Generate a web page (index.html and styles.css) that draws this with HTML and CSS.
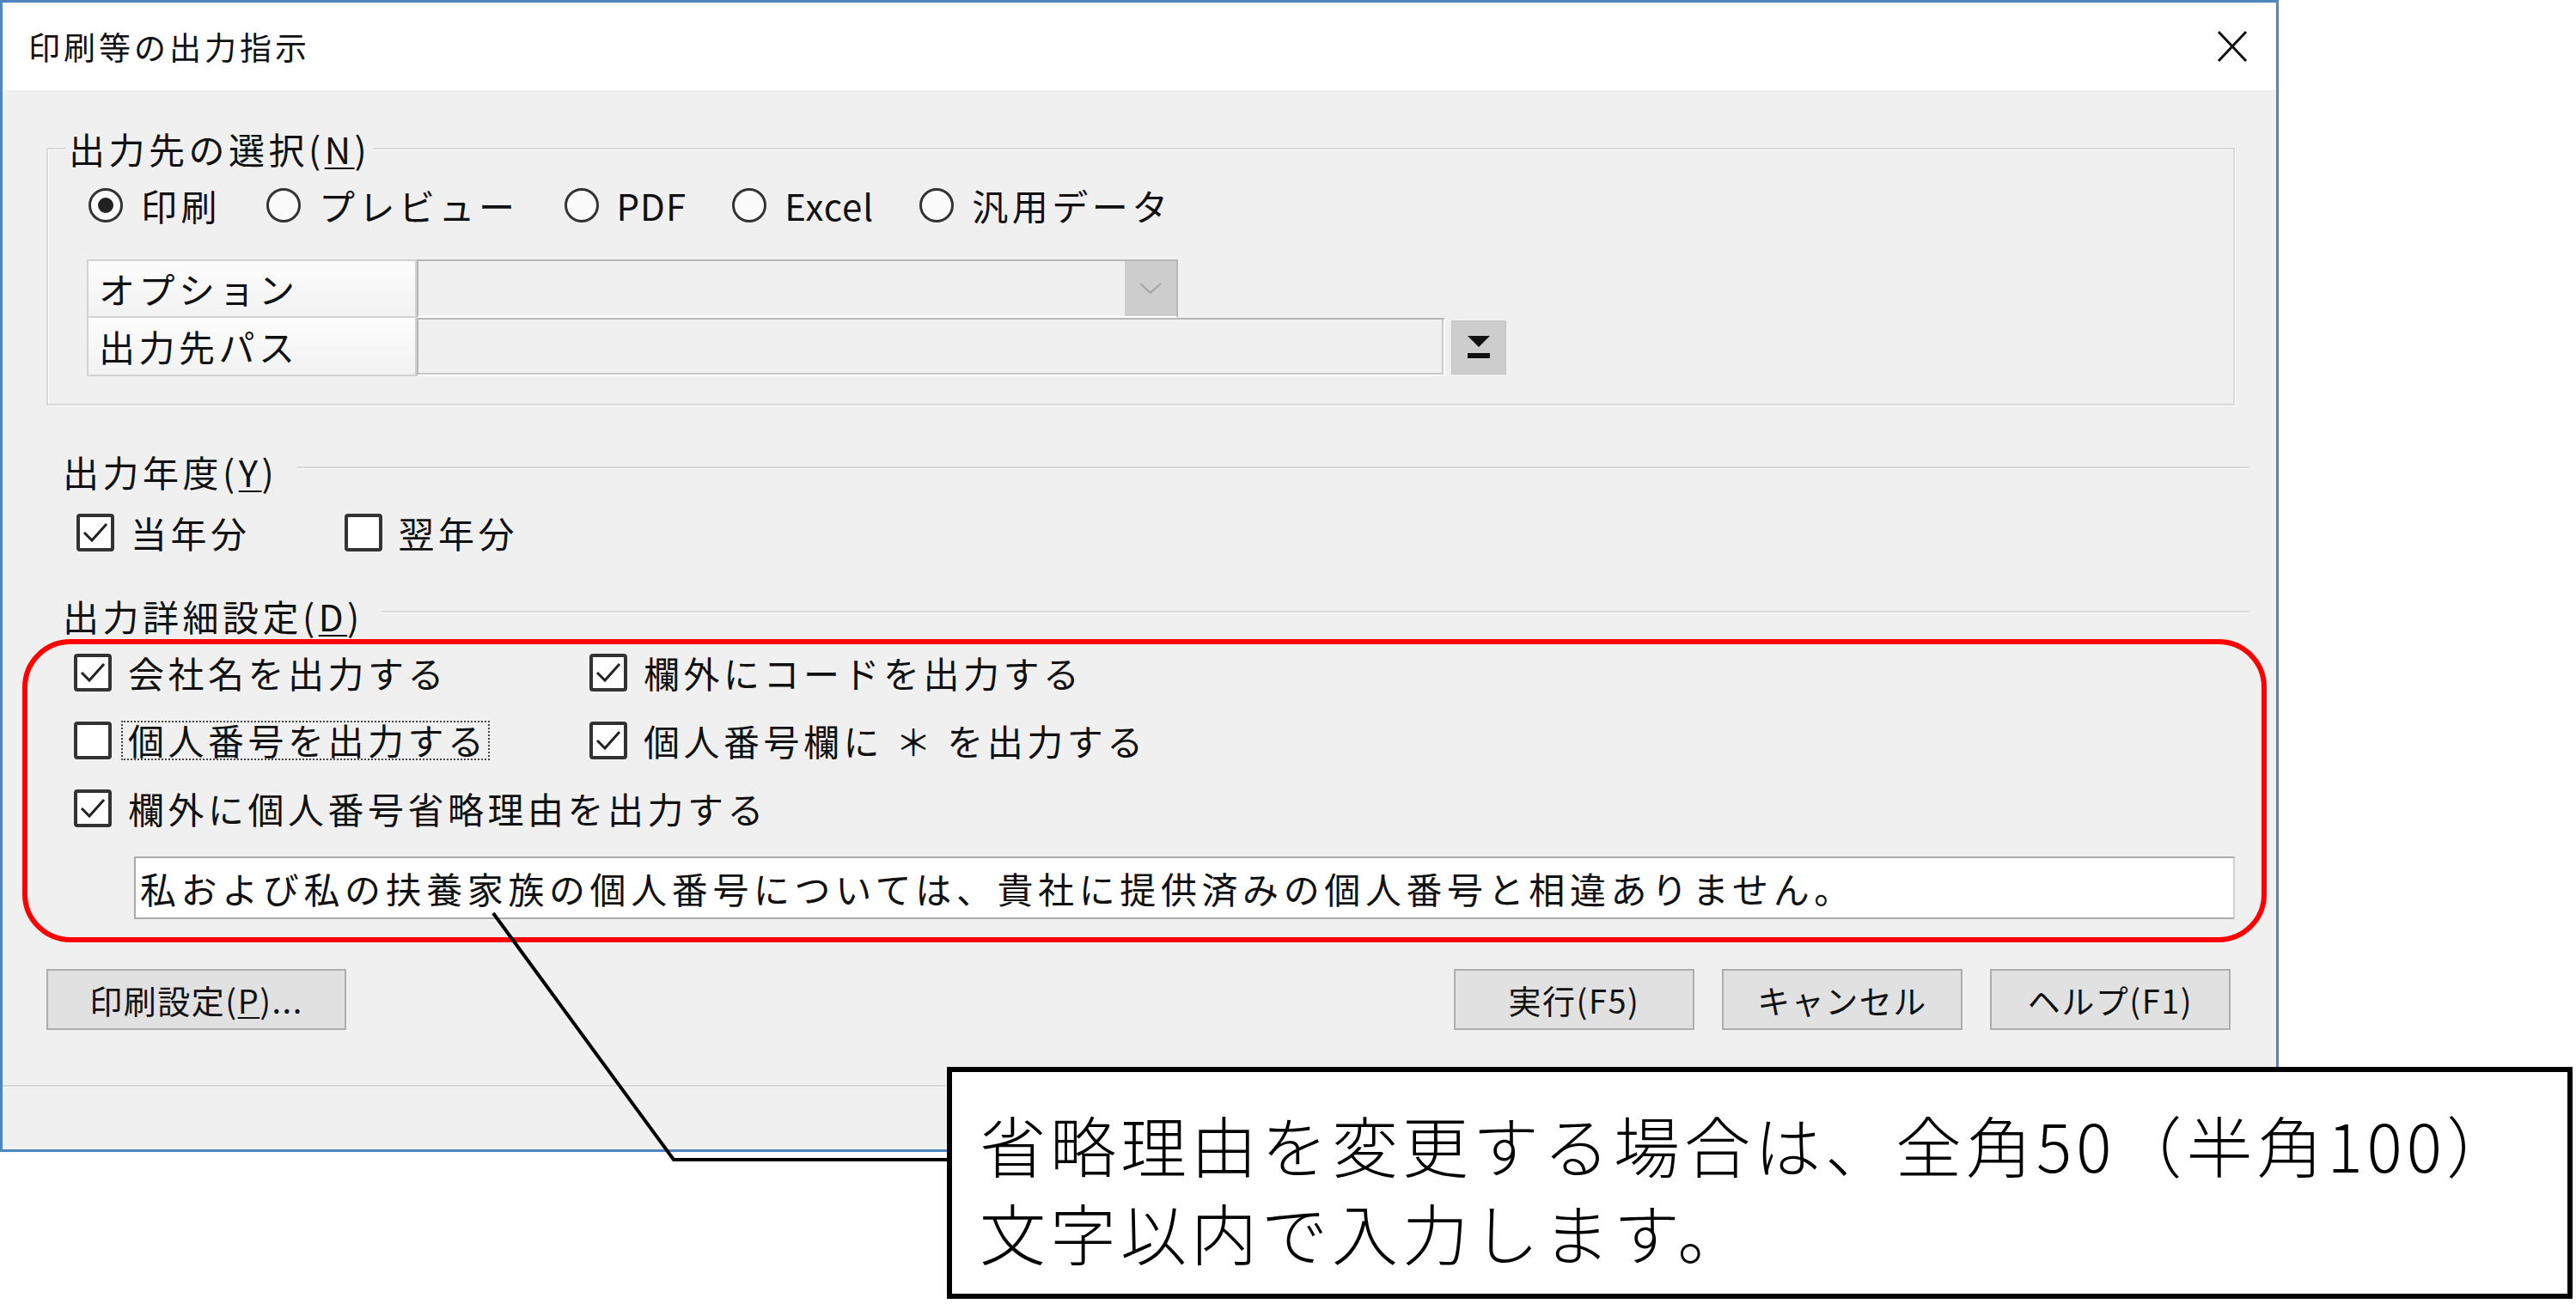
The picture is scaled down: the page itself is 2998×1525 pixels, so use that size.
FILE: index.html
```html
<!DOCTYPE html>
<html lang="ja">
<head>
    <meta charset="UTF-8">
    <title>印刷等の出力指示</title>
    <link rel="stylesheet" href="styles.css">
</head>
<body>
<div class="page">
    <div class="dialog">
        <div class="titlebar">
            <span class="title">印刷等の出力指示</span>
            <svg class="close" width="38" height="38" viewBox="0 0 38 38"><path d="M3 2 L35 36 M35 2 L3 36" stroke="#111" stroke-width="3" fill="none"/></svg>
        </div>
        <div class="dlg-body">
            <div class="group">
                <div class="group-title">出力先の選択(<u>N</u>)</div>
                <div class="radio-row">
                    <label class="radio"><svg width="42" height="42" viewBox="0 0 42 42"><circle cx="21" cy="21" r="18.5" fill="#fbfbfb" stroke="#333" stroke-width="3"/><circle cx="21" cy="21" r="9" fill="#222"/></svg>印刷</label>
                    <label class="radio"><svg width="42" height="42" viewBox="0 0 42 42"><circle cx="21" cy="21" r="18.5" fill="#fbfbfb" stroke="#333" stroke-width="3"/></svg>プレビュー</label>
                    <label class="radio"><svg width="42" height="42" viewBox="0 0 42 42"><circle cx="21" cy="21" r="18.5" fill="#fbfbfb" stroke="#333" stroke-width="3"/></svg><span class="latin">PDF</span></label>
                    <label class="radio"><svg width="42" height="42" viewBox="0 0 42 42"><circle cx="21" cy="21" r="18.5" fill="#fbfbfb" stroke="#333" stroke-width="3"/></svg><span class="latin">Excel</span></label>
                    <label class="radio"><svg width="42" height="42" viewBox="0 0 42 42"><circle cx="21" cy="21" r="18.5" fill="#fbfbfb" stroke="#333" stroke-width="3"/></svg>汎用データ</label>
                </div>
                <div class="opt-table">
                    <div class="opt-row">
                        <div class="opt-label">オプション</div>
                        <div class="opt-field combo">
                            <span class="combo-btn"><svg width="26" height="14" viewBox="0 0 26 14"><polyline points="1,1 13,12 25,1" fill="none" stroke="#a3a3a3" stroke-width="2"/></svg></span>
                        </div>
                    </div>
                    <div class="opt-row">
                        <div class="opt-label">出力先パス</div>
                        <div class="opt-field path"></div>
                        <span class="path-btn"><svg width="26" height="26" viewBox="0 0 26 26"><polygon points="0,0 26,0 13,13" fill="#111"/><rect x="0" y="20" width="26" height="6" fill="#111"/></svg></span>
                    </div>
                </div>
            </div>

            <div class="section-head"><span>出力年度(<u>Y</u>)</span><span class="rule"></span></div>
            <div class="year-row">
                <label class="check"><svg width="44" height="44" viewBox="0 0 44 44"><rect x="2" y="2" width="40" height="40" rx="2" fill="#fff" stroke="#333" stroke-width="4"/><polyline points="9,22 18,31 35,12" fill="none" stroke="#222" stroke-width="3"/></svg>当年分</label>
                <label class="check"><svg width="44" height="44" viewBox="0 0 44 44"><rect x="2" y="2" width="40" height="40" rx="2" fill="#fff" stroke="#333" stroke-width="4"/></svg>翌年分</label>
            </div>

            <div class="section-head"><span>出力詳細設定(<u>D</u>)</span><span class="rule"></span></div>
            <div class="highlight">
                <div class="detail-grid">
                    <label class="check"><svg width="44" height="44" viewBox="0 0 44 44"><rect x="2" y="2" width="40" height="40" rx="2" fill="#fff" stroke="#333" stroke-width="4"/><polyline points="9,22 18,31 35,12" fill="none" stroke="#222" stroke-width="3"/></svg>会社名を出力する</label>
                    <label class="check"><svg width="44" height="44" viewBox="0 0 44 44"><rect x="2" y="2" width="40" height="40" rx="2" fill="#fff" stroke="#333" stroke-width="4"/><polyline points="9,22 18,31 35,12" fill="none" stroke="#222" stroke-width="3"/></svg>欄外にコードを出力する</label>
                    <label class="check"><svg width="44" height="44" viewBox="0 0 44 44"><rect x="2" y="2" width="40" height="40" rx="2" fill="#fff" stroke="#333" stroke-width="4"/></svg><span class="focus">個人番号を出力する</span></label>
                    <label class="check"><svg width="44" height="44" viewBox="0 0 44 44"><rect x="2" y="2" width="40" height="40" rx="2" fill="#fff" stroke="#333" stroke-width="4"/><polyline points="9,22 18,31 35,12" fill="none" stroke="#222" stroke-width="3"/></svg>個人番号欄に ＊ を出力する</label>
                    <label class="check wide"><svg width="44" height="44" viewBox="0 0 44 44"><rect x="2" y="2" width="40" height="40" rx="2" fill="#fff" stroke="#333" stroke-width="4"/><polyline points="9,22 18,31 35,12" fill="none" stroke="#222" stroke-width="3"/></svg>欄外に個人番号省略理由を出力する</label>
                </div>
                <div class="reason-input">私および私の扶養家族の個人番号については、貴社に提供済みの個人番号と相違ありません。</div>
            </div>

            <div class="btn-row">
                <button class="btn btn-wide">印刷設定(<u>P</u>)...</button>
                <div class="btn-group">
                    <button class="btn">実行(F5)</button>
                    <button class="btn">キャンセル</button>
                    <button class="btn">ヘルプ(F1)</button>
                </div>
            </div>
            <div class="sep"></div>
        </div>
    </div>

    <svg class="leader" width="2998" height="1525" viewBox="0 0 2998 1525"><polyline points="574,1063 784,1350 1106,1350" fill="none" stroke="#000" stroke-width="4"/></svg>
    <div class="callout">省略理由を変更する場合は、全角50（半角100）<br>文字以内で入力します。</div>
</div>
</body>
</html>
```

FILE: styles.css
```css
body { margin: 0; background: #fff; font-family: "Noto Sans CJK JP", "Noto Sans", sans-serif; color: #111; }
.page { position: relative; width: 2998px; height: 1525px; overflow: hidden; }

/* dialog frame */
.dialog { width: 2652px; height: 1341px; box-sizing: border-box; border: 3px solid #4f86bd; background: #f0f0f0; display: flex; flex-direction: column; }
.titlebar { height: 102px; flex: none; background: #fff; display: flex; align-items: center; justify-content: space-between; padding: 0 32px 0 30px; }
.title { font-size: 37px; letter-spacing: 4px; color: #111; }
.close { display: block; }

.dlg-body { flex: 1; font-size: 42px; letter-spacing: 4.5px; line-height: 40px; }
u { text-decoration-thickness: 2px; text-underline-offset: 4px; }
.latin { letter-spacing: 1px; }

/* group box */
.group { margin: 67px 48px 0 51px; border: 2px solid #d9d9d9; box-shadow: inset 1px 1px 0 #fff, 1px 1px 0 #fff; padding: 0 0 32px 0; }
.group-title { width: fit-content; height: 40px; margin: -21px 0 0 20px; padding: 0 4px; background: #f0f0f0; }
.radio-row { display: flex; align-items: center; gap: 52px; height: 44px; margin: 24px 0 0 46px; }
.radio { display: flex; align-items: center; gap: 20px; }
.radio svg, .check svg { display: block; flex: none; }

.opt-table { margin: 41px 0 0 45px; }
.opt-row { display: flex; align-items: center; height: 68px; }
.opt-label { width: 384px; height: 68px; box-sizing: border-box; border: 2px solid #d2d2d2; background: linear-gradient(#fdfdfd, #f2f2f2); padding-left: 12px; display: flex; align-items: center; }
.opt-row + .opt-row .opt-label { border-top: none; }
.opt-field { height: 68px; box-sizing: border-box; border: 2px solid #b7b7b7; border-right-color: #fff; border-bottom-color: #fff; background: #f0f0f0; }
.combo { width: 886px; display: flex; justify-content: flex-end; border-right-color: #b7b7b7; }
.combo-btn { width: 60px; height: 100%; background: #cdcdcd; display: flex; align-items: center; justify-content: center; }
.path { width: 1197px; box-shadow: inset -2px -2px 0 #c9c9c9; }
.path-btn { width: 64px; height: 63px; margin-left: 7px; box-sizing: border-box; border: 1px solid #c3c3c3; background: #cdcdcd; display: flex; align-items: center; justify-content: center; }

/* etched section headings */
.section-head { display: flex; align-items: center; height: 40px; margin: 57px 32px 0 70px; }
.section-head .rule { flex: 1; margin: 0 0 10px 22px; border-top: 2px solid #dadada; border-bottom: 1px solid #fafafa; }
.year-row { display: flex; align-items: center; gap: 109px; height: 44px; margin: 29px 0 0 86px; }
.check { display: flex; align-items: center; gap: 19px; white-space: nowrap; }
.year-row + .section-head { margin-top: 55px; }

/* red annotation frame */
.highlight { margin: 7px 11px 0 23px; border: 6px solid #f00; border-radius: 56px; padding: 11px 31px 21px 54px; }
.detail-grid { display: grid; grid-template-columns: 600px auto; grid-auto-rows: 44px; row-gap: 35px; }
.detail-grid .wide { grid-column: 1 / 3; }
.focus { margin-left: -8px; padding-left: 6px; height: 42px; border: 2px dotted #444; }
.reason-input { height: 73px; box-sizing: border-box; margin: 34px 0 0 70px; border: 2px solid #ababab; border-right-color: #d4d4d4; background: #fff; padding-left: 5px; display: flex; align-items: center; letter-spacing: 5.6px; white-space: nowrap; }

/* buttons */
.btn-row { display: flex; justify-content: space-between; margin: 31px 53px 0 51px; }
.btn-group { display: flex; gap: 32px; }
.btn { height: 71px; width: 280px; box-sizing: border-box; background: #e1e1e1; border: 2px solid #adadad; font-family: inherit; font-size: 38px; letter-spacing: 1.5px; color: #111; padding: 0; }
.btn-wide { width: 349px; }
.sep { margin-top: 64px; border-top: 2px solid #d8d8d8; border-bottom: 1px solid #fafafa; }

/* callout */
.leader { position: absolute; left: 0; top: 0; pointer-events: none; }
.callout { position: absolute; left: 1102px; top: 1242px; width: 1892px; height: 270px; box-sizing: border-box; border: 6px solid #000; background: #fff; padding: 33px 0 0 32px; font-size: 77px; font-weight: 300; letter-spacing: 5px; line-height: 102px; white-space: nowrap; color: #000; }
```
